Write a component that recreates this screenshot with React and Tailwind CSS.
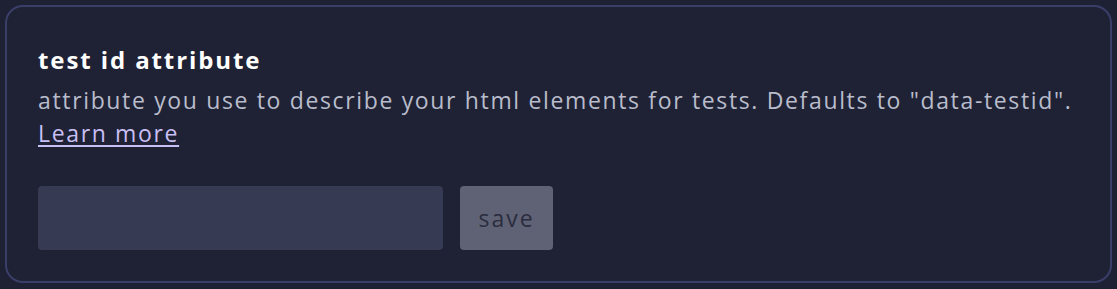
export default function App() {
  return (
    <div className="min-h-[289px] bg-[#1e2133] p-[5px] pb-[5px]" style={{ fontFamily: "'Open Sans', Lato, sans-serif" }}>
      <div className="h-[278px] rounded-[18px] border-2 border-[#3a3e69] bg-[#1f2234] px-[31px] pt-[35px]">
        <h2 className="text-[24px] font-bold leading-[36px] tracking-[1.9px] text-white">test id attribute</h2>
        <p className="mt-[6px] text-[23px] leading-[33px] tracking-[1.65px] text-[#b9bccb]">
          attribute you use to describe your html elements for tests. Defaults to "data-testid".
          <br />
          <a href="#" className="text-[#c8bff5] underline underline-offset-[3px]">Learn more</a>
        </p>
        <div className="mt-[36px] flex gap-[17px]">
          <input className="h-[64px] w-[405px] rounded-[4px] bg-[#363a53] px-3 text-white outline-none" />
          <button className="h-[64px] w-[93px] rounded-[4px] bg-[#5f6274] text-[23px] tracking-[2px] text-[#2a2d3f]">save</button>
        </div>
      </div>
    </div>
  );
}
